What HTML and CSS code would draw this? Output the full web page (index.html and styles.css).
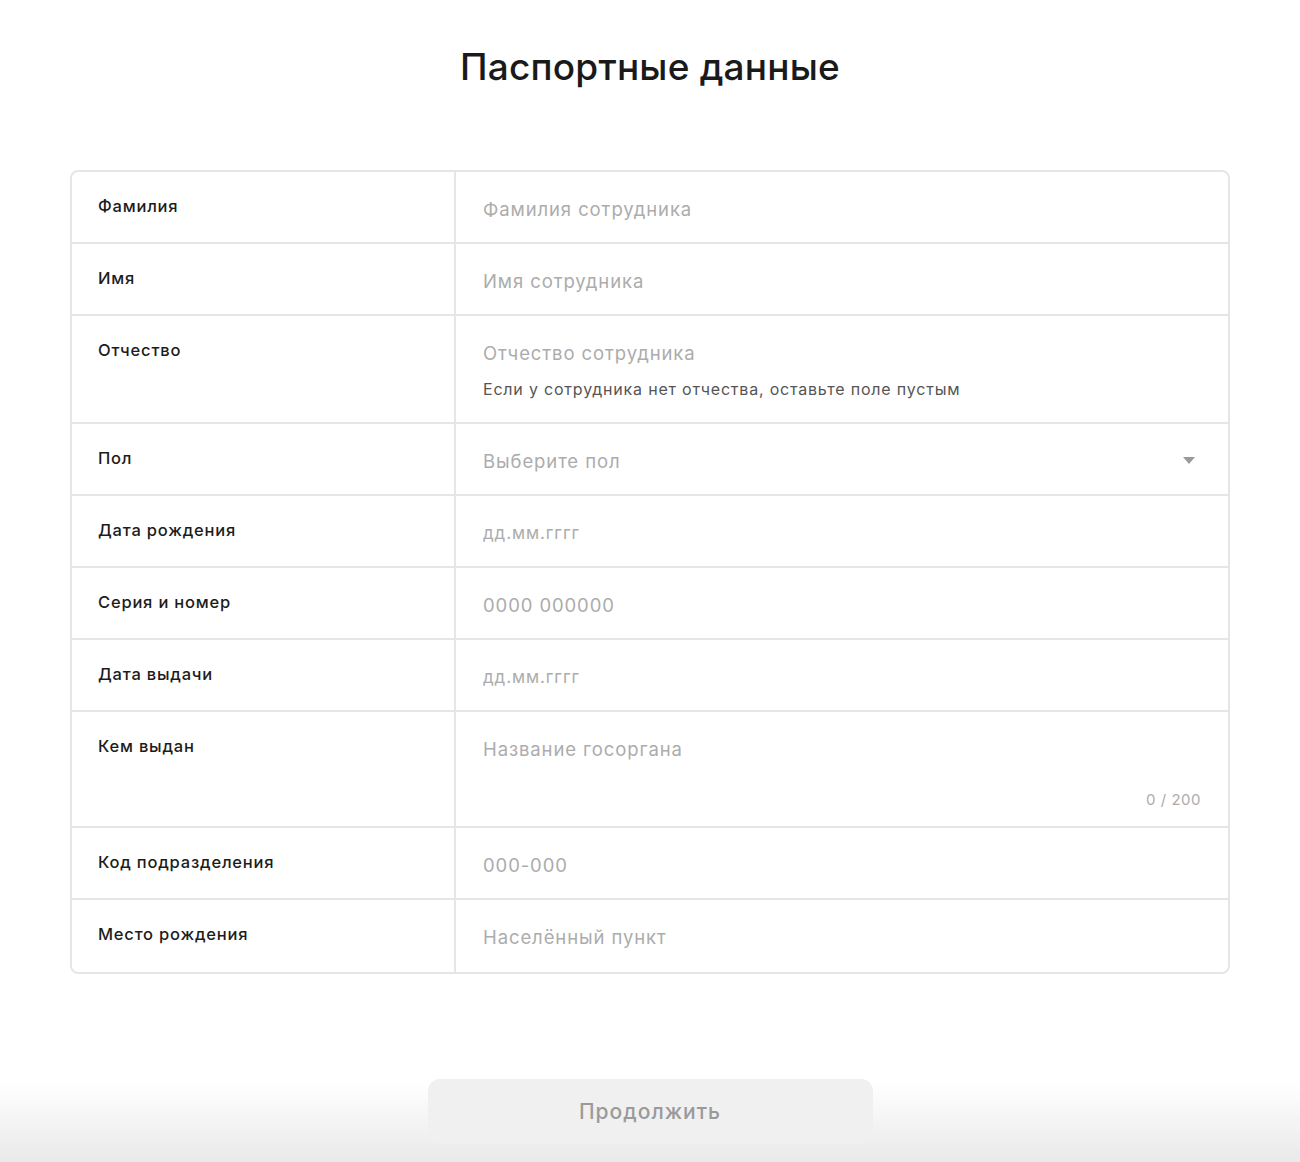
FILE: index.html
```html
<!DOCTYPE html>
<html lang="ru">
<head>
    <meta charset="UTF-8">
    <meta name="viewport" content="width=device-width, initial-scale=1.0">
    <title>Паспортные данные</title>
    <link rel="stylesheet" href="styles.css">
</head>
<body>
    <main class="page">
        <h1 class="title">Паспортные данные</h1>

        <div class="form-table">
            <div class="row">
                <div class="label">Фамилия</div>
                <div class="field"><input class="input" type="text" placeholder="Фамилия сотрудника"></div>
            </div>
            <div class="row">
                <div class="label">Имя</div>
                <div class="field"><input class="input" type="text" placeholder="Имя сотрудника"></div>
            </div>
            <div class="row">
                <div class="label">Отчество</div>
                <div class="field">
                    <input class="input" type="text" placeholder="Отчество сотрудника">
                    <div class="hint">Если у сотрудника нет отчества, оставьте поле пустым</div>
                </div>
            </div>
            <div class="row">
                <div class="label">Пол</div>
                <div class="field select">
                    <span class="placeholder">Выберите пол</span>
                    <svg class="caret" width="12" height="7" viewBox="0 0 12 7"><path d="M0 0h12L6 7z" fill="#9a9a9a"/></svg>
                </div>
            </div>
            <div class="row">
                <div class="label">Дата рождения</div>
                <div class="field"><input class="input small" type="text" placeholder="дд.мм.гггг"></div>
            </div>
            <div class="row">
                <div class="label">Серия и номер</div>
                <div class="field"><input class="input" type="text" placeholder="0000 000000"></div>
            </div>
            <div class="row">
                <div class="label">Дата выдачи</div>
                <div class="field"><input class="input small" type="text" placeholder="дд.мм.гггг"></div>
            </div>
            <div class="row">
                <div class="label">Кем выдан</div>
                <div class="field area">
                    <input class="input" type="text" placeholder="Название госоргана">
                    <div class="counter">0 / 200</div>
                </div>
            </div>
            <div class="row">
                <div class="label">Код подразделения</div>
                <div class="field"><input class="input" type="text" placeholder="000-000"></div>
            </div>
            <div class="row">
                <div class="label">Место рождения</div>
                <div class="field"><input class="input" type="text" placeholder="Населённый пункт"></div>
            </div>
        </div>
    </main>

    <footer class="bottom-bar">
        <button class="btn-next" disabled>Продолжить</button>
    </footer>
</body>
</html>
```

FILE: styles.css
```css
* {
    box-sizing: border-box;
}

body {
    margin: 0;
    background-color: #fff;
    font-family: Inter, "Open Sans", sans-serif;
    color: #1c1c1c;
}

.page {
    width: 1160px;
    margin: 0 auto;
    padding-top: 44px;
    padding-bottom: 108px;
}

.title {
    margin: 0 0 80px;
    text-align: center;
    font-size: 37px;
    font-weight: 500;
    line-height: 46px;
    letter-spacing: 0.2px;
    color: #1a1a1a;
}

.form-table {
    border: 2px solid #e6e6e6;
    border-radius: 8px;
    overflow: hidden;
}

.row {
    display: grid;
    grid-template-columns: 384px 1fr;
    min-height: 72px;
    border-bottom: 2px solid #e6e6e6;
}

.row:last-child {
    border-bottom: none;
}

.label {
    padding: 23px 26px 0;
    font-size: 16.5px;
    font-weight: 500;
    line-height: 22px;
    letter-spacing: 0.8px;
    border-right: 2px solid #e6e6e6;
}

.field {
    padding: 24px 27px 0;
    min-height: 70px;
}

.input {
    display: block;
    width: 100%;
    border: none;
    outline: none;
    padding: 0;
    font-family: inherit;
    font-size: 18.5px;
    line-height: 26px;
    letter-spacing: 0.9px;
    color: #1c1c1c;
    background: transparent;
}

.input::placeholder,
.placeholder {
    color: #acacac;
}

.input.small {
    font-size: 17px;
}

.hint {
    margin-top: 12px;
    padding-bottom: 22px;
    font-size: 16px;
    line-height: 22px;
    letter-spacing: 0.8px;
    color: #555;
}

.select {
    display: flex;
    align-items: flex-start;
    justify-content: space-between;
    font-size: 18.5px;
    line-height: 26px;
    letter-spacing: 0.9px;
}

.caret {
    margin-top: 9px;
    margin-right: 6px;
}

.area {
    min-height: 114px;
}

.counter {
    margin-top: 28px;
    padding-bottom: 15px;
    text-align: right;
    font-size: 15px;
    line-height: 20px;
    letter-spacing: 0.5px;
    color: #acacac;
}

.bottom-bar {
    position: fixed;
    left: 0;
    right: 0;
    bottom: 0;
    display: flex;
    justify-content: center;
    align-items: flex-end;
    height: 100px;
    padding: 0 0 18px;
    background: linear-gradient(to bottom, rgba(255,255,255,0) 20px, #e9e9e9 100%);
}

.btn-next {
    width: 445px;
    height: 65px;
    border: none;
    border-radius: 12px;
    background-color: #f0f0f0;
    font-family: inherit;
    font-size: 21px;
    font-weight: 500;
    letter-spacing: 1px;
    color: #9a9a9a;
}
```
